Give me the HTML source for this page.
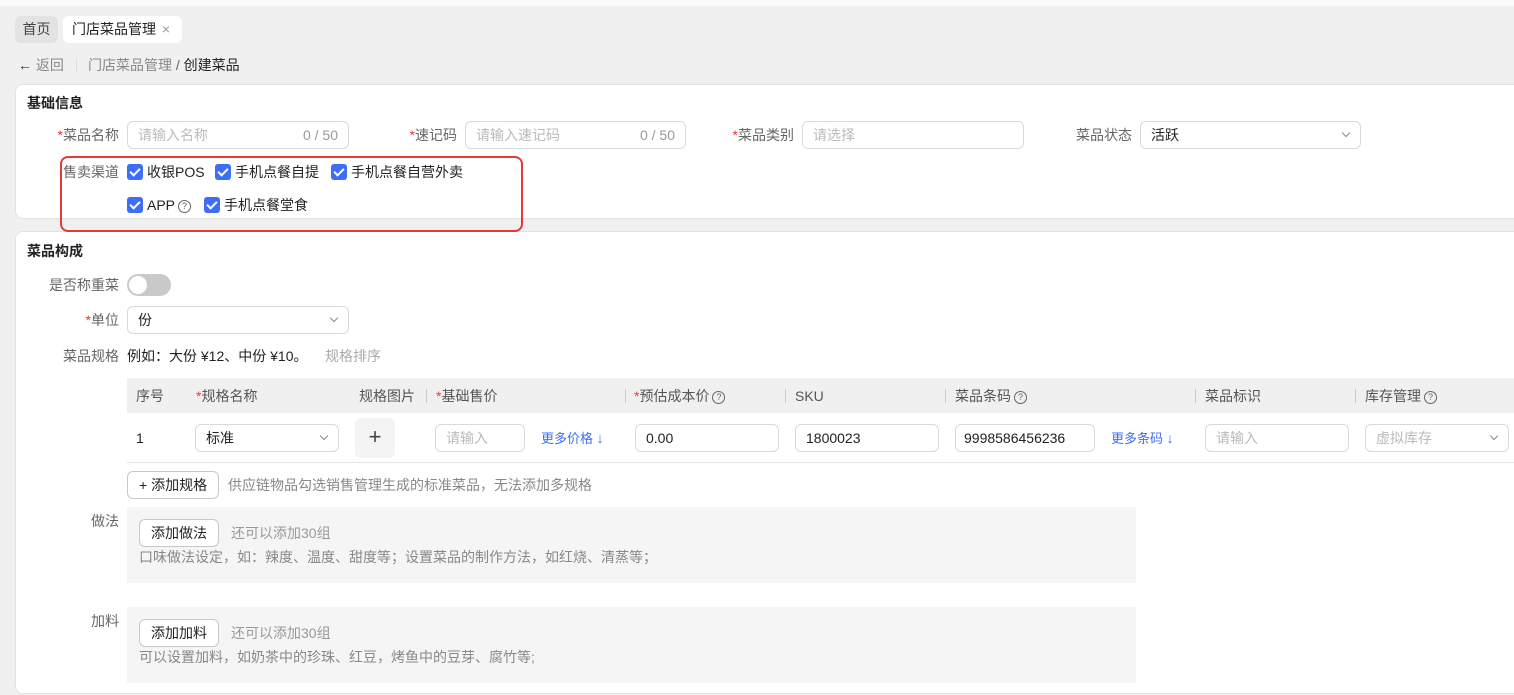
<!DOCTYPE html>
<html><head><meta charset="utf-8"><style>
*{box-sizing:border-box;margin:0;padding:0}
body{width:1514px;height:695px;overflow:hidden;background:#f0f0f0;font-family:"Liberation Sans","Noto Sans CJK SC",sans-serif;font-size:14px;color:#222;position:relative}
.a{position:absolute;white-space:nowrap}
.lbl{position:absolute;color:#666;text-align:right;white-space:nowrap;line-height:20px}
.st{color:#e53935}
.inp{position:absolute;height:28px;border:1px solid #d9d9d9;border-radius:6px;background:#fff;line-height:26px;padding:0 10px;color:#222;white-space:nowrap}
.ph{color:#bbb}
.chev{position:absolute;right:11px;top:8px;width:6px;height:6px;border-right:1.2px solid #888;border-bottom:1.2px solid #888;transform:rotate(45deg)}
.cb{position:absolute;width:16px;height:16px;background:#3d6ef5;border-radius:3px}
.cb:after{content:"";position:absolute;left:5px;top:2px;width:4px;height:8px;border-right:2px solid #fff;border-bottom:2px solid #fff;transform:rotate(45deg)}
.q{display:inline-block;width:13px;height:13px;border:1px solid #666;border-radius:50%;font-size:9px;line-height:11px;text-align:center;color:#666;vertical-align:1px;margin-left:3px}
.card{position:absolute;left:15px;width:1520px;background:#fff;border:1px solid #e2e2e2;border-radius:8px}
.th{position:absolute;top:387px;color:#555;line-height:18px;white-space:nowrap}
.sep{position:absolute;top:389px;width:1px;height:14px;background:#ccc}
.btn{position:absolute;height:28px;border:1px solid #c8c8c8;border-radius:6px;background:#fff;line-height:26px;padding:0 11px;color:#222}
.link{color:#3d6ef5;font-size:13px}
</style></head><body>
<div class="a" style="left:0;top:0;width:1514px;height:6px;background:#fafafa"></div>
<div class="a" style="left:15px;top:16px;width:43px;height:27px;background:#e3e3e3;border-radius:6px;line-height:27px;text-align:center;color:#444">首页</div>
<div class="a" style="left:63px;top:16px;width:119px;height:27px;background:#fff;border-radius:6px;line-height:27px;padding-left:9px;color:#222">门店菜品管理 <span style="color:#999;margin-left:2px">×</span></div>
<div class="a" style="left:18px;top:56px;line-height:18px;color:#888"><span style="color:#333">←</span> 返回</div>
<div class="a" style="left:76px;top:59px;width:1px;height:13px;background:#ddd"></div>
<div class="a" style="left:88px;top:56px;line-height:18px;color:#888">门店菜品管理 <span style="color:#666">/</span> <span style="color:#222">创建菜品</span></div>

<div class="card" style="top:84px;height:135px"></div>
<div class="a" style="left:27px;top:94px;font-weight:bold;line-height:18px">基础信息</div>
<div class="lbl" style="right:1395px;top:125px"><span class="st">*</span>菜品名称</div>
<div class="inp" style="left:127px;top:121px;width:222px"><span class="ph">请输入名称</span><span style="position:absolute;right:10px;color:#999">0 / 50</span></div>
<div class="lbl" style="right:1057px;top:125px"><span class="st">*</span>速记码</div>
<div class="inp" style="left:465px;top:121px;width:221px"><span class="ph">请输入速记码</span><span style="position:absolute;right:10px;color:#999">0 / 50</span></div>
<div class="lbl" style="right:720px;top:125px"><span class="st">*</span>菜品类别</div>
<div class="inp" style="left:802px;top:121px;width:222px"><span class="ph">请选择</span></div>
<div class="lbl" style="right:382px;top:125px">菜品状态</div>
<div class="inp" style="left:1140px;top:121px;width:221px">活跃<span class="chev"></span></div>
<div class="lbl" style="right:1395px;top:162px">售卖渠道</div>
<div class="cb" style="left:127px;top:164px"></div><div class="a" style="left:147px;top:162px;line-height:20px">收银POS</div>
<div class="cb" style="left:215px;top:164px"></div><div class="a" style="left:235px;top:162px;line-height:20px">手机点餐自提</div>
<div class="cb" style="left:331px;top:164px"></div><div class="a" style="left:351px;top:162px;line-height:20px">手机点餐自营外卖</div>
<div class="cb" style="left:127px;top:197px"></div><div class="a" style="left:147px;top:195px;line-height:20px">APP<span class="q">?</span></div>
<div class="cb" style="left:204px;top:197px"></div><div class="a" style="left:224px;top:195px;line-height:20px">手机点餐堂食</div>

<div class="card" style="top:231px;height:463px"></div>
<div class="a" style="left:60px;top:156px;width:463px;height:76px;border:2px solid #e53935;border-radius:8px"></div>
<div class="a" style="left:27px;top:242px;font-weight:bold;line-height:18px">菜品构成</div>
<div class="lbl" style="right:1395px;top:275px">是否称重菜</div>
<div class="a" style="left:127px;top:274px;width:44px;height:22px;border-radius:11px;background:#c9c9c9"></div>
<div class="a" style="left:129px;top:276px;width:18px;height:18px;border-radius:50%;background:#fff"></div>
<div class="lbl" style="right:1395px;top:310px"><span class="st">*</span>单位</div>
<div class="inp" style="left:127px;top:306px;width:222px">份<span class="chev"></span></div>
<div class="lbl" style="right:1395px;top:346px">菜品规格</div>
<div class="a" style="left:127px;top:346px;line-height:20px">例如：大份 ¥12、中份 ¥10。</div>
<div class="a" style="left:325px;top:346px;line-height:20px;color:#aaa">规格排序</div>

<div class="a" style="left:127px;top:378px;width:1387px;height:35px;background:#f0f0f0"></div>
<div class="th" style="left:136px">序号</div>
<div class="th" style="left:196px"><span class="st">*</span>规格名称</div>
<div class="th" style="left:359px">规格图片</div>
<div class="sep" style="left:426px"></div><div class="th" style="left:436px"><span class="st">*</span>基础售价</div>
<div class="sep" style="left:625px"></div><div class="th" style="left:634px"><span class="st">*</span>预估成本价<span class="q">?</span></div>
<div class="sep" style="left:785px"></div><div class="th" style="left:795px">SKU</div>
<div class="sep" style="left:945px"></div><div class="th" style="left:955px">菜品条码<span class="q">?</span></div>
<div class="sep" style="left:1195px"></div><div class="th" style="left:1205px">菜品标识</div>
<div class="sep" style="left:1355px"></div><div class="th" style="left:1365px">库存管理<span class="q">?</span></div>

<div class="a" style="left:136px;top:428px;line-height:20px">1</div>
<div class="inp" style="left:195px;top:424px;width:144px">标准<span class="chev"></span></div>
<div class="a" style="left:355px;top:418px;width:40px;height:40px;background:#f4f4f4;border-radius:6px;text-align:center;line-height:38px;font-size:22px;color:#444">+</div>
<div class="inp" style="left:435px;top:424px;width:90px"><span class="ph">请输入</span></div>
<div class="a link" style="left:541px;top:429px;line-height:18px">更多价格 <span style="font-size:14px">↓</span></div>
<div class="inp" style="left:635px;top:424px;width:144px">0.00</div>
<div class="inp" style="left:795px;top:424px;width:144px">1800023</div>
<div class="inp" style="left:955px;top:424px;width:140px;padding:0 8px">9998586456236</div>
<div class="a link" style="left:1111px;top:429px;line-height:18px">更多条码 <span style="font-size:14px">↓</span></div>
<div class="inp" style="left:1205px;top:424px;width:144px"><span class="ph">请输入</span></div>
<div class="inp" style="left:1365px;top:424px;width:144px"><span class="ph">虚拟库存</span><span class="chev"></span></div>
<div class="a" style="left:127px;top:462px;width:1387px;height:1px;background:#e2e2e2"></div>

<div class="btn" style="left:127px;top:471px">+ 添加规格</div>
<div class="a" style="left:228px;top:476px;line-height:18px;color:#888">供应链物品勾选销售管理生成的标准菜品，无法添加多规格</div>

<div class="lbl" style="right:1395px;top:511px">做法</div>
<div class="a" style="left:127px;top:507px;width:1009px;height:76px;background:#f5f5f5"></div>
<div class="btn" style="left:139px;top:519px">添加做法</div>
<div class="a" style="left:231px;top:524px;line-height:18px;color:#999">还可以添加30组</div>
<div class="a" style="left:139px;top:548px;line-height:18px;color:#888">口味做法设定，如：辣度、温度、甜度等；设置菜品的制作方法，如红烧、清蒸等；</div>

<div class="lbl" style="right:1395px;top:611px">加料</div>
<div class="a" style="left:127px;top:607px;width:1009px;height:76px;background:#f5f5f5"></div>
<div class="btn" style="left:139px;top:619px">添加加料</div>
<div class="a" style="left:231px;top:624px;line-height:18px;color:#999">还可以添加30组</div>
<div class="a" style="left:139px;top:648px;line-height:18px;color:#888">可以设置加料，如奶茶中的珍珠、红豆，烤鱼中的豆芽、腐竹等;</div>
</body></html>
